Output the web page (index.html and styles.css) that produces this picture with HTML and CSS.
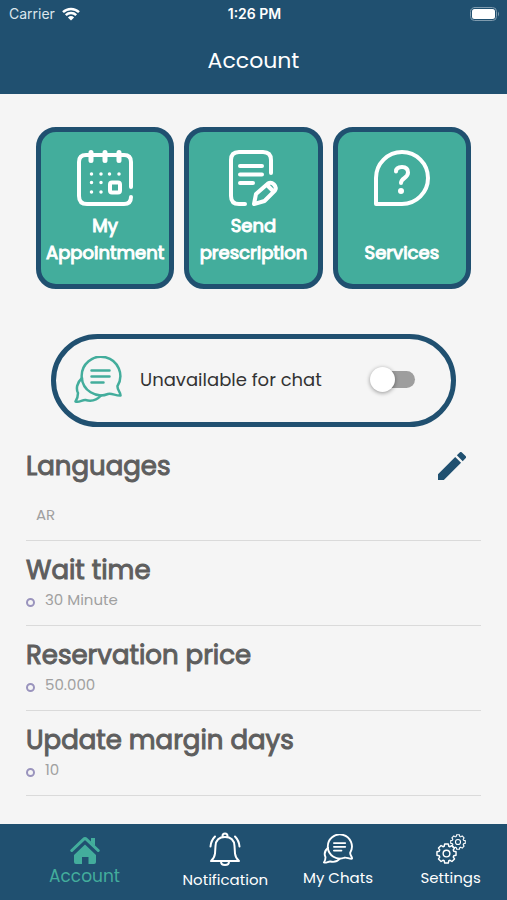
FILE: index.html
```html
<!DOCTYPE html>
<html lang="en">
<head>
<meta charset="utf-8">
<meta name="viewport" content="width=device-width, initial-scale=1">
<title>Account</title>
<link rel="stylesheet" href="styles.css">
</head>
<body>
<svg class="defs" aria-hidden="true">
  <symbol id="chats" viewBox="0 0 48 48">
    <path d="M43.500 30A19.300 19.300 0 1 0 34 38C38 37 42 40 46.500 39.500C47 37 43 34 43.500 30Z"/>
    <path d="M8 22C2.500 27 2 33 4 37C4 40 3.500 42.500 1.500 45.500C5 47 8.500 43.500 11.500 44C17 45.500 22.500 44.500 27 39.500"/>
    <path d="M17.500 14.500h18M17.500 20.500h18M17.500 26.500h12"/>
  </symbol>
  <symbol id="gear" viewBox="-11 -11 22 22">
    <path d="M-2.400-7.600L-1.900-10H1.900L2.400-7.600L3.700-7.100L5.700-8.400L8.400-5.700L7.100-3.700L7.600-2.400L10-1.900V1.900L7.600 2.400L7.100 3.700L8.400 5.700L5.700 8.400L3.700 7.100L2.400 7.600L1.900 10H-1.900L-2.400 7.600L-3.700 7.100L-5.700 8.400L-8.400 5.700L-7.100 3.700L-7.600 2.400L-10 1.900V-1.900L-7.600-2.400L-7.100-3.700L-8.400-5.700L-5.700-8.400L-3.700-7.100Z"/>
    <circle r="3.500"/>
  </symbol>
</svg>

<header class="top">
  <div class="status">
    <span class="carrier">Carrier
      <svg class="wifi" viewBox="0 0 18 14" aria-hidden="true"><path d="M1 5.200a11.500 11.500 0 0 1 16 0M3.800 8.100a7.500 7.500 0 0 1 10.400 0"/><path class="solid" d="M9 13.500L5.900 10.400a4.500 4.500 0 0 1 6.200 0Z"/></svg>
    </span>
    <span class="clock">1:26 PM</span>
    <svg class="battery" viewBox="0 0 30 14" aria-hidden="true"><rect class="shell" x="0.500" y="0.500" width="26" height="13" rx="4"/><rect class="charge" x="2" y="2" width="23" height="10" rx="2.500"/><path class="tip" d="M28 4.500q2 2.500 0 5Z"/></svg>
  </div>
  <h1 class="title">Account</h1>
</header>

<main class="content">
  <div class="cards">
    <button class="card" type="button">
      <svg class="card-icon" viewBox="0 0 56 56" aria-hidden="true">
        <path d="M54 37V12q0-7-7-7H9q-7 0-7 7v34q0 8 8 8h37q7 0 7-7"/>
        <path class="rings" d="M14 2.500v8M28 2.500v8M42 2.500v8"/>
        <rect x="33" y="32.500" width="10" height="10" rx="2"/>
        <path class="dots" d="M14.500 24h0M24 24h0M32.500 24h0M42 24h0M14.500 32.500h0M24 32.500h0M14.500 42h0M24 42h0"/>
      </svg>
      <span class="card-label">My Appointment</span>
    </button>
    <button class="card" type="button">
      <svg class="card-icon" viewBox="0 0 56 56" aria-hidden="true">
        <path d="M46 23V10q0-8-8-8H14q-8 0-8 8v36q0 8 8 8h6M15 16h22M15 24.500h22M15 33h13"/>
        <path d="M29 54L31 44L43 33.500q3-2 6 1t1 6L39.500 51ZM42 35l6 6"/>
      </svg>
      <span class="card-label">Send prescription</span>
    </button>
    <button class="card" type="button">
      <svg class="card-icon" viewBox="0 0 56 56" aria-hidden="true">
        <path d="M2 54V28A26 26 0 1 1 28 54Z"/>
        <path d="M22 21.500q0-4.500 6-4.500t6 5.500q0 3-3.500 5.500t-3.500 5"/>
        <circle class="solid" cx="27" cy="41" r="3"/>
      </svg>
      <span class="card-label">Services</span>
    </button>
  </div>

  <div class="availability">
    <svg class="chat-icon" aria-hidden="true"><use href="#chats"/></svg>
    <label class="availability-label" for="chat-switch">Unavailable for chat</label>
    <input class="switch" id="chat-switch" type="checkbox" role="switch">
  </div>

  <section class="details">
    <div class="row">
      <div class="row-head">
        <h2 class="row-title">Languages</h2>
        <button class="edit" type="button" aria-label="Edit languages">
          <svg class="pencil" viewBox="3 3 18 18" aria-hidden="true"><path d="M3 17.250V21h3.750L17.810 9.940l-3.750-3.750L3 17.250zM20.710 7.040a1 1 0 0 0 0-1.410l-2.340-2.340a1 1 0 0 0-1.410 0l-1.830 1.830 3.750 3.750 1.830-1.830z"/></svg>
        </button>
      </div>
      <p class="language">AR</p>
    </div>
    <div class="row">
      <h2 class="row-title">Wait time</h2>
      <p class="value">30 Minute</p>
    </div>
    <div class="row">
      <h2 class="row-title">Reservation price</h2>
      <p class="value">50.000</p>
    </div>
    <div class="row">
      <h2 class="row-title">Update margin days</h2>
      <p class="value">10</p>
    </div>
  </section>
</main>

<nav class="tabs">
  <a class="tab active" href="#account" aria-current="page">
    <svg class="home-icon" viewBox="0 0 30 28" aria-hidden="true"><path class="roof" d="M1.800 14.500L13.500 3.300q1.500-1.400 3 0L28.200 14.500"/><path class="solid" d="M21 2h4v8l-4-4ZM15 8.500L26 19v7q0 2-2 2h-5.500v-7h-6.500v7H6q-2 0-2-2v-7Z"/></svg>
    <span>Account</span>
  </a>
  <a class="tab" href="#notification">
    <svg class="bell-icon" viewBox="0 0 32 34" aria-hidden="true"><path d="M13.500 5V4q0-2.500 2.500-2.500T18.500 4v1M2 29h28q-3.500-3-4-7.500L25.500 14Q25 5 16 5T6.500 14L6 21.500Q5.500 26 2 29ZM12 29.500q0 3.500 4 3.500t4-3.500M6 4.500Q2 8.500 1.500 14.500M26 4.500q4 4 4.500 10"/></svg>
    <span>Notification</span>
  </a>
  <a class="tab" href="#chats-list">
    <svg class="chats-icon" aria-hidden="true"><use href="#chats"/></svg>
    <span>My Chats</span>
  </a>
  <a class="tab" href="#settings">
    <svg class="gears-icon" viewBox="0 0 30 30" aria-hidden="true"><use href="#gear" x="0" y="9" width="21" height="21"/><use href="#gear" x="14" y="0" width="16" height="16"/></svg>
    <span>Settings</span>
  </a>
</nav>
</body>
</html>
```

FILE: styles.css
```css
:root {
  --navy: #205070;
  --green: #43ad9c;
  --page: #f5f5f5;
}

*,
*::before {
  box-sizing: border-box;
}

body {
  margin: 0;
  min-height: 100vh;
  display: flex;
  flex-direction: column;
  background: var(--page);
  font-family: Poppins, Inter, sans-serif;
  color: #333;
}

h1, h2, p {
  margin: 0;
}

button {
  font: inherit;
  cursor: pointer;
}

svg {
  display: block;
  fill: none;
  stroke: currentColor;
  stroke-linecap: round;
  stroke-linejoin: round;
}

.solid {
  fill: currentColor;
  stroke: none;
}

.defs {
  position: absolute;
  width: 0;
  height: 0;
}

.top {
  background: var(--navy);
  color: #fff;
  height: 94px;
}

.status {
  display: grid;
  grid-template-columns: 1fr auto 1fr;
  align-items: center;
  height: 27px;
  padding: 0 7px 0 9px;
  font-family: Inter, sans-serif;
  font-size: 14px;
}

.carrier {
  display: flex;
  align-items: center;
  gap: 7px;
  color: #dce6ec;
}

.wifi {
  width: 18px;
  height: 14px;
  color: #fff;
  stroke-width: 2.500;
  stroke-linecap: butt;
}

.clock {
  font-weight: 600;
}

.battery {
  width: 30px;
  height: 14px;
  justify-self: end;
  stroke: none;
}

.shell {
  stroke: #7f9bae;
}

.charge {
  fill: #fff;
}

.tip {
  fill: #7f9bae;
}

.title {
  font-size: 22px;
  font-weight: 400;
  line-height: 67px;
  text-align: center;
}

.content {
  flex: 1;
  padding: 33px 26px 27px;
}

.cards {
  display: grid;
  grid-template-columns: repeat(3, 1fr);
  gap: 10px;
  margin: 0 10px;
}

.card {
  display: flex;
  flex-direction: column;
  align-items: center;
  gap: 6px;
  padding: 18px 0;
  border: 5px solid var(--navy);
  border-radius: 20px;
  background: var(--green);
  color: #fff;
}

.card-icon {
  width: 56px;
  height: 56px;
  stroke-width: 4;
}

.rings {
  stroke-width: 5;
}

.dots {
  stroke-width: 3.500;
}

.card-label {
  display: flex;
  align-items: flex-end;
  min-height: 54px;
  font-size: 18px;
  font-weight: 400;
  line-height: 27px;
  -webkit-text-stroke: 1px currentColor;
}

.availability {
  display: flex;
  align-items: center;
  height: 93px;
  margin: 45px 25px 0;
  padding: 0 36px 2px 18px;
  border: 5px solid var(--navy);
  border-radius: 47px;
}

.chat-icon {
  width: 48px;
  height: 48px;
  color: var(--green);
  stroke-width: 2.500;
}

.availability-label {
  flex: 1;
  margin-left: 18px;
  font-size: 18px;
}

.switch {
  appearance: none;
  position: relative;
  width: 43px;
  height: 17px;
  margin: 0;
  border-radius: 9px;
  background: #9e9e9e;
}

.switch::before {
  content: "";
  position: absolute;
  top: -4px;
  left: -2px;
  width: 25px;
  height: 25px;
  border-radius: 50%;
  background: #fff;
  box-shadow: 0 1px 4px rgba(0, 0, 0, 0.4);
}

.switch:checked::before {
  left: 20px;
}

.details {
  padding-top: 15px;
}

.row {
  border-bottom: 1px solid #dadada;
  padding: 10px 0 14px;
}

.row:first-child {
  padding: 0 0 14px;
}

.row-head {
  display: flex;
  align-items: center;
  justify-content: space-between;
  height: 48px;
}

.row-title {
  font-size: 26px;
  font-weight: 400;
  line-height: 38px;
  color: #5e5e5e;
  -webkit-text-stroke: 1px currentColor;
}

.edit {
  padding: 0;
  margin-right: 15px;
  border: 0;
  background: none;
  color: var(--navy);
}

.pencil {
  width: 28px;
  height: 28px;
  fill: currentColor;
  stroke: none;
}

.language,
.value {
  font-size: 15px;
  line-height: 22px;
  color: #a0a0a0;
}

.language {
  margin: 14px 0 0 10px;
}

.value {
  display: flex;
  align-items: center;
  gap: 10px;
}

.value::before {
  content: "";
  width: 9px;
  height: 9px;
  margin-top: 4px;
  border: 2px solid #9a94bd;
  border-radius: 50%;
}

.tabs {
  display: grid;
  grid-template-columns: 3fr 2fr 2fr 2fr;
  height: 76px;
  background: var(--navy);
}

.tab {
  display: flex;
  flex-direction: column;
  align-items: center;
  justify-content: center;
  gap: 3px;
  padding-bottom: 2px;
  color: #fff;
  font-size: 15px;
  line-height: 22px;
  text-decoration: none;
}

.active {
  color: var(--green);
  font-size: 17px;
  gap: 1px;
}

.home-icon {
  width: 30px;
  height: 28px;
}

.roof {
  stroke-width: 3;
}

.bell-icon {
  width: 32px;
  height: 34px;
  stroke-width: 2;
}

.chats-icon {
  width: 30px;
  height: 30px;
  stroke-width: 3;
}

.gears-icon {
  width: 30px;
  height: 30px;
  stroke-width: 1.500;
}
```
